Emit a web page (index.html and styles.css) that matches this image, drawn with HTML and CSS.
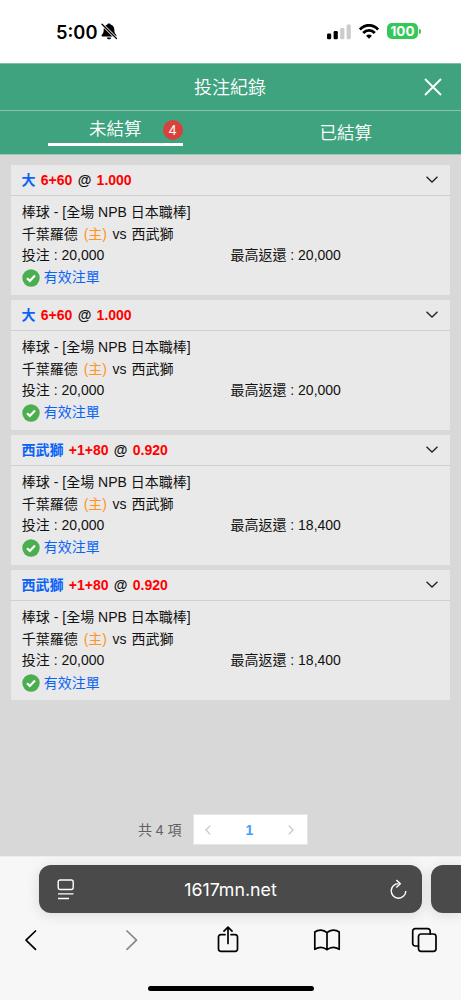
FILE: index.html
```html
<!DOCTYPE html>
<html lang="zh-Hant">
<head>
  <meta charset="UTF-8">
  <meta name="viewport" content="width=device-width, initial-scale=1">
  <title>投注紀錄</title>
  <link rel="stylesheet" href="styles.css">
</head>
<body>

  <div class="status-bar">
    <div class="clock">
      <span>5:00</span>
      <svg class="bell" viewBox="0 0 16 17" width="16" height="17">
        <path d="M8 .5c-.9 0-1.500.6-1.600 1.100C3.900 2.300 2.700 4.300 2.700 6.500c0 3.300-.8 4-1.900 5.300-.6.800-.2 1.700.7 1.700h13c.9 0 1.300-.9.700-1.700-1.100-1.300-1.900-2-1.900-5.300 0-2.200-1.200-4.200-3.700-4.900C9.500 1.100 8.900.5 8 .5z"/>
        <path d="M5.800 14.400h4.400c-.2 1.200-1.100 1.900-2.200 1.900s-2-.7-2.200-1.900z"/>
        <path d="M1 1.200l14.500 14.300" stroke="#fff" stroke-width="3"/>
        <path d="M1 1.200l14.500 14.300" stroke="#000" stroke-width="1.300" stroke-linecap="round"/>
      </svg>
    </div>
    <div class="signals">
      <svg viewBox="0 0 24 16" width="24" height="16">
        <rect x="0" y="9.500" width="4.200" height="5.800" rx="1.200"/>
        <rect x="6.600" y="7" width="4.200" height="8.300" rx="1.200"/>
        <rect x="13.200" y="4" width="4.200" height="11.300" rx="1.200" fill="#ccc"/>
        <rect x="19.600" y="0.500" width="4.200" height="14.800" rx="1.200" fill="#ccc"/>
      </svg>
      <svg viewBox="0 0 20 15" width="20" height="15" fill="none" stroke="#000" stroke-width="2.800">
        <path d="M.9 5.500C6-.1 14-.1 19.100 5.500"/>
        <path d="M4.200 9c3.300-3.500 8.300-3.500 11.600 0"/>
        <path d="M10 14.700l-2.900-3c1.600-1.500 4.200-1.500 5.800 0z" fill="#000" stroke="none"/>
      </svg>
      <div class="battery">100</div>
    </div>
  </div>

  <header class="title-bar">
    <h1>投注紀錄</h1>
    <svg class="close" viewBox="0 0 18 18" width="18" height="18">
      <path d="M1 1l16 16M17 1L1 17"/>
    </svg>
  </header>

  <nav class="tabs">
    <div class="tab active"><div class="tab-label">未結算<span class="badge">4</span></div></div>
    <div class="tab"><div class="tab-label">已結算</div></div>
  </nav>

  <main class="content">
    <div class="card">
      <div class="card-head">
        <span class="pick">大</span><span class="odds">6+60</span><span>@</span><span class="odds">1.000</span>
        <svg class="arrow" viewBox="0 0 12 7" width="12" height="7"><path d="M.5.700L6 6 11.500.700"/></svg>
      </div>
      <div class="card-body">
        <div>棒球 - [全場 NPB 日本職棒]</div>
        <div>千葉羅德 <span class="home">(主)</span> vs <span class="away">西武獅</span></div>
        <div class="amounts"><span>投注 : 20,000</span><span>最高返還 : 20,000</span></div>
        <div class="state"><svg viewBox="0 0 18 18" width="18" height="18"><circle cx="9" cy="9" r="8.700"/><path d="M5 9.200l2.800 2.700L13 6.500"/></svg>有效注單</div>
      </div>
    </div>

    <div class="card">
      <div class="card-head">
        <span class="pick">大</span><span class="odds">6+60</span><span>@</span><span class="odds">1.000</span>
        <svg class="arrow" viewBox="0 0 12 7" width="12" height="7"><path d="M.5.700L6 6 11.500.700"/></svg>
      </div>
      <div class="card-body">
        <div>棒球 - [全場 NPB 日本職棒]</div>
        <div>千葉羅德 <span class="home">(主)</span> vs <span class="away">西武獅</span></div>
        <div class="amounts"><span>投注 : 20,000</span><span>最高返還 : 20,000</span></div>
        <div class="state"><svg viewBox="0 0 18 18" width="18" height="18"><circle cx="9" cy="9" r="8.700"/><path d="M5 9.200l2.800 2.700L13 6.500"/></svg>有效注單</div>
      </div>
    </div>

    <div class="card">
      <div class="card-head">
        <span class="pick">西武獅</span><span class="odds">+1+80</span><span>@</span><span class="odds">0.920</span>
        <svg class="arrow" viewBox="0 0 12 7" width="12" height="7"><path d="M.5.700L6 6 11.500.700"/></svg>
      </div>
      <div class="card-body">
        <div>棒球 - [全場 NPB 日本職棒]</div>
        <div>千葉羅德 <span class="home">(主)</span> vs <span class="away">西武獅</span></div>
        <div class="amounts"><span>投注 : 20,000</span><span>最高返還 : 18,400</span></div>
        <div class="state"><svg viewBox="0 0 18 18" width="18" height="18"><circle cx="9" cy="9" r="8.700"/><path d="M5 9.200l2.800 2.700L13 6.500"/></svg>有效注單</div>
      </div>
    </div>

    <div class="card">
      <div class="card-head">
        <span class="pick">西武獅</span><span class="odds">+1+80</span><span>@</span><span class="odds">0.920</span>
        <svg class="arrow" viewBox="0 0 12 7" width="12" height="7"><path d="M.5.700L6 6 11.500.700"/></svg>
      </div>
      <div class="card-body">
        <div>棒球 - [全場 NPB 日本職棒]</div>
        <div>千葉羅德 <span class="home">(主)</span> vs <span class="away">西武獅</span></div>
        <div class="amounts"><span>投注 : 20,000</span><span>最高返還 : 18,400</span></div>
        <div class="state"><svg viewBox="0 0 18 18" width="18" height="18"><circle cx="9" cy="9" r="8.700"/><path d="M5 9.200l2.800 2.700L13 6.500"/></svg>有效注單</div>
      </div>
    </div>

    <div class="pagination">
      <span class="total">共 4 項</span>
      <div class="pager">
        <svg viewBox="0 0 6 10" width="6" height="10"><path d="M5.300.600L.900 5l4.400 4.400"/></svg>
        <span class="page">1</span>
        <svg viewBox="0 0 6 10" width="6" height="10"><path d="M.700.600L5.100 5 .700 9.400"/></svg>
      </div>
    </div>
  </main>

  <footer class="browser">
    <div class="address-row">
      <div class="address">
        <svg viewBox="0 0 18 21" width="18" height="21">
          <rect x="1.200" y="1" width="15" height="9.500" rx="2"/>
          <path d="M1 14.900h15.500M1 19.500h11"/>
        </svg>
        <span>1617mn.net</span>
        <svg viewBox="0 0 18 21" width="18" height="21">
          <path d="M9.500 4.600A7.300 7.300 0 1 0 16.800 12"/>
          <path d="M7.300 1l4 3.700-4 3.800"/>
        </svg>
      </div>
      <div class="next-tab"></div>
    </div>
    <div class="toolbar">
      <svg viewBox="0 0 28 28" width="28" height="28"><path d="M18.500 5L9 14.200l9.500 9.200"/></svg>
      <svg class="disabled" viewBox="0 0 28 28" width="28" height="28"><path d="M11 5l9.500 9.200-9.500 9.200"/></svg>
      <svg viewBox="0 0 28 28" width="28" height="28">
        <path d="M11 8.700H6.700a2.200 2.200 0 0 0-2.200 2.200v12.200a2.200 2.200 0 0 0 2.200 2.200h14.600a2.200 2.200 0 0 0 2.200-2.200V10.900a2.200 2.200 0 0 0-2.200-2.200H17"/>
        <path d="M14 17.500V1.500M10 5.200L14 1.200l4 4"/>
      </svg>
      <svg viewBox="0 0 28 28" width="28" height="28">
        <path d="M14 6.700C10.500 3.300 5.200 3.400 1.800 6v17.300c3.800-2.400 8.700-2.300 12.200.4 3.500-2.700 8.400-2.800 12.200-.4V6C22.800 3.400 17.500 3.300 14 6.700zM14 6.700v17"/>
      </svg>
      <svg viewBox="0 0 28 28" width="28" height="28">
        <path d="M7.500 20H4.200a2.500 2.500 0 0 1-2.500-2.500V5.200A2.500 2.500 0 0 1 4.200 2.700h12.500a2.500 2.500 0 0 1 2.500 2.500v2.700"/>
        <rect x="7.500" y="8" width="17.500" height="17.300" rx="2.500"/>
      </svg>
    </div>
    <div class="home-bar"></div>
  </footer>

</body>
</html>
```
FILE: styles.css
```css
* {
  box-sizing: border-box;
}

body {
  margin: 0;
  height: 1000px;
  display: flex;
  flex-direction: column;
  overflow: hidden;
  font-family: "Liberation Sans", "Noto Sans CJK TC", sans-serif;
  font-size: 14px;
  color: #111;
  background-color: #fff;
}

svg {
  flex: none;
  display: block;
}

/* phone status bar */
.status-bar {
  height: 63px;
  padding: 0 43px 0 56px;
  display: flex;
  justify-content: space-between;
  align-items: center;
  font-family: Inter, sans-serif;
  color: #000;
}

.clock {
  display: flex;
  align-items: center;
  gap: 4px;
  font-size: 18.300px;
  font-weight: 600;
}

.signals {
  display: flex;
  align-items: center;
  gap: 8px;
}

.battery {
  position: relative;
  width: 31px;
  height: 16px;
  margin-bottom: 1px;
  border-radius: 5px;
  background-color: #34c759;
  color: #fff;
  font-size: 13.500px;
  font-weight: 700;
  line-height: 16px;
  text-align: center;
}

.battery::after {
  content: "";
  position: absolute;
  right: -3px;
  top: 6px;
  width: 2px;
  height: 5px;
  border-radius: 0 2px 2px 0;
  background-color: #34c759;
}

/* header */
.title-bar {
  height: 48px;
  padding: 0 19px 1px;
  display: grid;
  grid-template-columns: 18px 1fr 18px;
  align-items: center;
  background-color: #40a380;
  border-top: 1px solid #83bfa8;
  border-bottom: 1px solid #8dc1ae;
  color: #fff;
}

.title-bar h1 {
  grid-column: 2;
  margin: 0 1px 1px 0;
  font-size: 18px;
  font-weight: 350;
  text-align: center;
}

.close {
  fill: none;
  stroke: #fff;
  stroke-width: 1.8;
}

.tabs {
  height: 44px;
  display: flex;
  background-color: #40a380;
  border-bottom: 1px solid #9dc4b6;
  color: #fff;
  font-size: 17.500px;
  font-weight: 350;
}

.tab {
  flex: 1;
  padding: 0 0 2px;
  display: flex;
  justify-content: center;
  align-items: center;
}

.tab.active {
  padding: 0;
  align-items: flex-start;
}

.tab.active .tab-label {
  width: 135px;
  height: 35px;
  line-height: 37px;
  text-align: center;
  border-bottom: 3px solid #fff;
  position: relative;
}

.badge {
  position: absolute;
  right: 0;
  top: 9px;
  width: 20px;
  height: 20px;
  border-radius: 50%;
  background-color: #d9413c;
  font-size: 14px;
  font-weight: 400;
  line-height: 20px;
}

/* bet list */
.content {
  height: 701px;
  padding: 10px 11px 11px;
  display: flex;
  flex-direction: column;
  gap: 5.100px;
  background-color: #d8d8d8;
}

.card {
  height: 130px;
  background-color: #e9e9e9;
}

.card-head {
  height: 31px;
  padding: 0 12px 0 10.500px;
  display: flex;
  align-items: center;
  gap: 5.300px;
  border-bottom: 1px solid #d0d0d0;
  font-weight: 700;
}

.pick {
  margin-bottom: 2px;
  color: #0b63f6;
}

.odds {
  color: #f00;
}

.arrow {
  margin: 0 0 2px auto;
  fill: none;
  stroke: #222;
  stroke-width: 1.3;
}

.card-body {
  padding: 6px 11px 0 10.800px;
  line-height: 21.500px;
}

.card-body > div {
  height: 21.500px;
}

.home {
  margin: 0 1.500px 0 2px;
  color: #ff941f;
}

.away {
  margin-left: 1.200px;
}

.amounts {
  display: grid;
  grid-template-columns: 1fr 1fr;
}

.card-body .state {
  height: 23px;
  display: flex;
  align-items: center;
  gap: 4px;
  color: #0b63f6;
}

.state circle {
  fill: #4bae4f;
}

.state path {
  fill: none;
  stroke: #fff;
  stroke-width: 2.2;
}

.pagination {
  margin: auto 142.500px 0 0;
  display: flex;
  justify-content: flex-end;
  align-items: center;
  gap: 11px;
  color: #606266;
}

.total {
  margin-bottom: 1px;
  font-size: 14px;
}

.pager {
  width: 115px;
  height: 31px;
  padding: 0 12px 0 11px;
  display: flex;
  justify-content: space-between;
  align-items: center;
  background-color: #fff;
  border: 1px solid #e6e6e6;
}

.pager path {
  fill: none;
  stroke: #c0c4cc;
  stroke-width: 1.2;
}

.page {
  color: #409eff;
  font-weight: 700;
}

/* mobile browser controls */
.browser {
  flex: 1;
  padding-top: 8px;
  background-color: #f7f7f7;
  border-top: 1px solid #ededed;
}

.address-row {
  padding-left: 39px;
  display: flex;
  gap: 9px;
}

.address {
  width: 383px;
  height: 48px;
  padding: 0 15px 0 18px;
  display: flex;
  justify-content: space-between;
  align-items: center;
  border-radius: 12px;
  background-color: #4a4a4a;
  box-shadow: 0 2px 14px rgba(0, 0, 0, 0.12);
  color: #fff;
  font-family: Inter, sans-serif;
  font-size: 17.800px;
}

.address span {
  margin-right: 3px;
}

.address path,
.address rect {
  fill: none;
  stroke: #fff;
  stroke-width: 1.4;
}

.next-tab {
  flex: 1;
  height: 48px;
  border-radius: 12px 0 0 12px;
  background-color: #4a4a4a;
  box-shadow: 0 2px 14px rgba(0, 0, 0, 0.12);
}

.toolbar {
  margin-top: 13px;
  padding: 0 22px 0 17px;
  display: flex;
  justify-content: space-between;
}

.toolbar path,
.toolbar rect {
  fill: none;
  stroke: #000;
  stroke-width: 1.7;
  stroke-linecap: round;
  stroke-linejoin: round;
}

.toolbar .disabled path {
  stroke: #888;
}

.home-bar {
  width: 166px;
  height: 5px;
  margin: 32px auto 0;
  border-radius: 3px;
  background-color: #000;
}
```
